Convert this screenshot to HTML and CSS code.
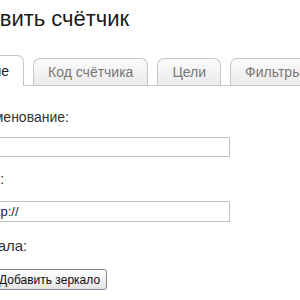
FILE: index.html
```html
<!DOCTYPE html>
<html lang="ru">
<head>
<meta charset="utf-8">
<link rel="stylesheet" href="styles.css">
</head>
<body>
<div class="page">
  <h1 class="title">Добавить счётчик</h1>
  <div class="tabs">
    <div class="tab tab-active">Общие</div>
    <div class="tab">Код счётчика</div>
    <div class="tab">Цели</div>
    <div class="tab">Фильтры</div>
    <div class="tab">Доступ</div>
  </div>
  <form class="form">
    <label class="label label-first">Наименование:</label>
    <input class="field" type="text">
    <label class="label">Сайт:</label>
    <input class="field field-url" type="text" value="http://">
    <label class="label label-mirror">Зеркала:</label>
    <button class="btn" type="button">Добавить зеркало</button>
  </form>
</div>
</body>
</html>
```
FILE: styles.css
```css
html, body {
  margin: 0;
  padding: 0;
  background: #fff;
  overflow: hidden;
}
.page {
  margin-left: -52px;
  font-family: "Liberation Sans", Arial, sans-serif;
  color: #222;
  width: 420px;
}
.title {
  margin: 6px 0 0 0;
  font-size: 22px;
  font-weight: normal;
  line-height: 25px;
  color: #1a1a1a;
}
.tabs {
  display: flex;
  align-items: flex-end;
  gap: 9px;
  margin-top: 24px;
  border-bottom: 1px solid #c9c9c9;
  height: 30px;
}
.tab {
  height: 26px;
  line-height: 26px;
  padding: 0 14px;
  font-size: 14px;
  color: #777;
  border: 1px solid #c6c6c6;
  border-bottom: none;
  border-radius: 7px 7px 0 0;
  background: linear-gradient(#fbfbfb, #ebebeb);
  white-space: nowrap;
}
.tab-active {
  line-height: 30px;
  background: #fff;
  color: #222;
  margin-bottom: -1px;
  height: 30px;
}
.form {
  display: flex;
  flex-direction: column;
  align-items: flex-start;
  padding-left: 20px;
}
.label {
  display: block;
  font-size: 14px;
  line-height: 16px;
  color: #333;
  margin-top: 14px;
}
.label-first {
  margin-top: 23px;
}
.label-mirror {
  margin-top: 16px;
  font-size: 15px;
  margin-left: -3px;
}
.field {
  box-sizing: border-box;
  width: 248px;
  height: 20px;
  margin-top: 12px;
  margin-left: 14px;
  border: 1px solid #bcc4cc;
  background: #fff;
  padding: 0 3px;
  font-family: "Liberation Sans", Arial, sans-serif;
  font-size: 13px;
  color: #222;
}
.field-url {
  height: 21px;
  margin-top: 14px;
}
.btn {
  margin-top: 15px;
  margin-left: 24px;
  height: 21px;
  padding: 0 6px;
  font-family: "Liberation Sans", Arial, sans-serif;
  font-size: 12px;
  color: #111;
  border: 1px solid #7a8a99;
  border-radius: 3px;
  background: linear-gradient(#ffffff, #e4e4e4);
}
```
